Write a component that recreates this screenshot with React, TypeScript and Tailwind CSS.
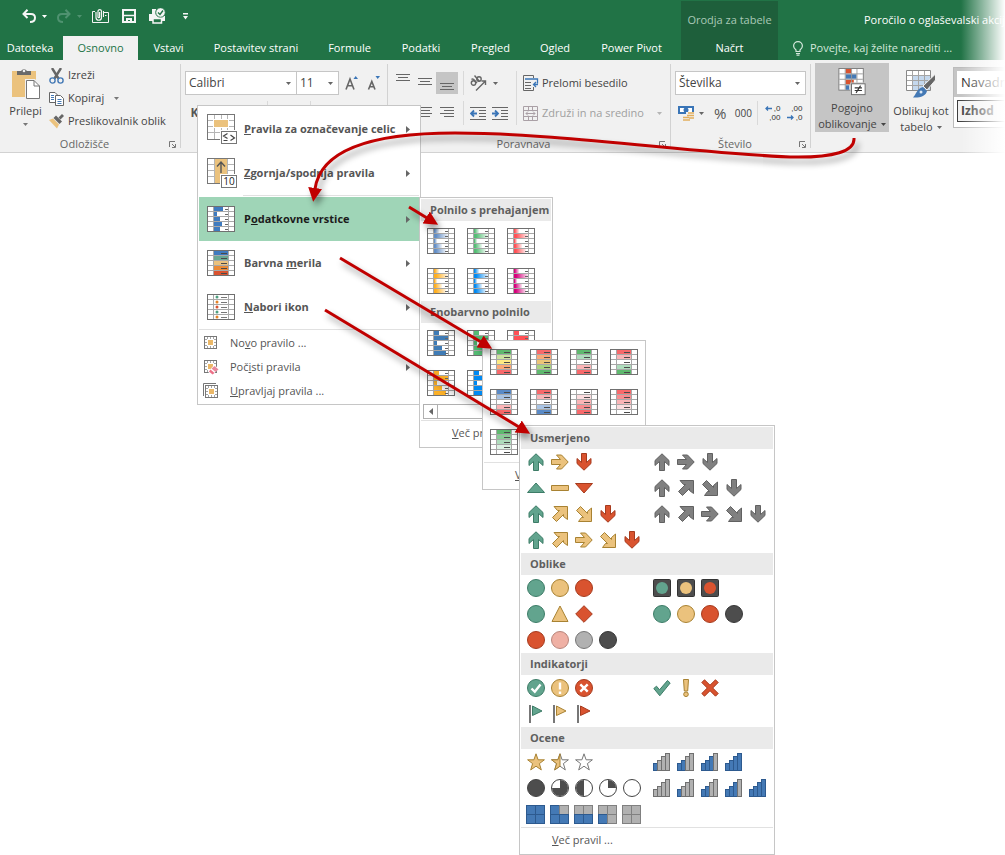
import React from 'react';

type Tone = 'green' | 'yellow' | 'red' | 'gray' | 'pink' | 'silver' | 'dark';

interface RibbonTab {
  label: string;
  width: string;
}

interface GalleryRow {
  label: string;
  left: React.ReactNode[];
  right?: React.ReactNode[];
}

interface GallerySection {
  title: string;
  rows: GalleryRow[];
}

const FILL: Record<Tone, string> = {
  green: '#62a48e',
  yellow: '#ebc27d',
  red: '#d9532f',
  gray: '#808080',
  pink: '#efb0a4',
  silver: '#b1b1b1',
  dark: '#4d4d4d',
};

const EDGE: Record<Tone, string> = {
  green: '#3d7c67',
  yellow: '#a88232',
  red: '#a63b1e',
  gray: '#616161',
  pink: '#b8857b',
  silver: '#767676',
  dark: '#383838',
};

const tabs: RibbonTab[] = [
  { label: 'Datoteka', width: 'w-[60px] mr-[3px]' },
  { label: 'Osnovno', width: 'w-[75px]' },
  { label: 'Vstavi', width: 'w-[61px]' },
  { label: 'Postavitev strani', width: 'w-[114px]' },
  { label: 'Formule', width: 'w-[73px]' },
  { label: 'Podatki', width: 'w-[70px]' },
  { label: 'Pregled', width: 'w-[69px]' },
  { label: 'Ogled', width: 'w-[60px]' },
  { label: 'Power Pivot', width: 'w-[93px]' },
];

/* ---------- small drawing helpers ---------- */

const Caret: React.FC<{ className?: string }> = ({ className = 'text-[#666]' }) => (
  <svg width="5" height="3" viewBox="0 0 5 3" className={`shrink-0 ${className}`}>
    <path d="M0 0H5L2.5 3Z" fill="currentColor" />
  </svg>
);

const Launcher: React.FC = () => (
  <svg width="7" height="7" viewBox="0 0 7 7" fill="none" stroke="#777">
    <path d="M.5 6V.5H6M3 3L6 6M6.5 3V6.5H3" />
  </svg>
);

const Lines: React.FC<{ rows: [number, number, number][] }> = ({ rows }) => (
  <svg width="22" height="22" viewBox="0 0 22 22" stroke="#666">
    {rows.map(([x1, x2, y]) => (
      <path key={y} d={`M${x1} ${y + 0.5}H${x2}`} />
    ))}
  </svg>
);

/* ---------- conditional formatting table thumbnails ---------- */

interface TableIconProps {
  fills: string[];
  widths?: number[];
  gradient?: boolean;
  dash?: 'short' | 'long';
}

const TableIcon: React.FC<TableIconProps> = ({ fills, widths, gradient = false, dash = 'short' }) => {
  const id = React.useId();
  return (
    <svg width="28" height="26" viewBox="0 0 28 26" className="shrink-0">
      {gradient && (
        <linearGradient id={id}>
          <stop offset="0.15" stopColor={fills[0]} />
          <stop offset="1" stopColor={fills[0]} stopOpacity="0.1" />
        </linearGradient>
      )}
      <rect width="28" height="26" fill="#fff" />
      <path d="M1 5.5H27M1 10.5H27M1 15.5H27M1 20.5H27M6.5 1V25M21.5 1V25" stroke="#a8a8a8" />
      {[0, 1, 2, 3, 4].map(i => (
        <g key={i}>
          <rect
            x="7"
            y={i * 5 + 1}
            width={widths ? widths[i] : 14}
            height="4"
            fill={gradient ? `url(#${id})` : fills[i % fills.length]}
          />
          <path
            d={dash === 'short' ? `M18 ${i * 5 + 3.5}H21` : `M14 ${i * 5 + 3.5}H20`}
            stroke={dash === 'short' ? '#666' : '#4a4a4a'}
          />
        </g>
      ))}
      <rect x="0.5" y="0.5" width="27" height="25" fill="none" stroke="#707070" />
    </svg>
  );
};

const BAR_WIDTHS = [5, 14, 3, 8, 12];

const HighlightRulesIcon = () => (
  <svg width="30" height="31" viewBox="0 0 30 31" className="shrink-0">
    <rect x="0.5" y="0.5" width="27" height="25" fill="#fff" stroke="#777" />
    <path d="M1 6.5H27M1 12.5H27M1 18.5H27M7.5 1V25M14.5 12V25M20.5 1V25M14.5 1V6" stroke="#b5b5b5" />
    <rect x="6" y="5" width="16" height="9" fill="#fff" />
    <rect x="7" y="6" width="14" height="7" fill="#ebc27d" />
    <rect x="13" y="16" width="17" height="15" fill="#fff" />
    <rect x="14.5" y="17.5" width="15" height="12" fill="#fff" stroke="#777" />
    <path d="M20.5 19.5L16.5 22L20.5 24.5M16.5 26.5H20.5M23.5 21L27.5 24L23.5 26.5" fill="none" stroke="#444" strokeWidth="1.2" />
  </svg>
);

const TopBottomIcon = () => (
  <svg width="30" height="31" viewBox="0 0 30 31" className="shrink-0">
    <rect x="0.5" y="0.5" width="27" height="25" fill="#fff" stroke="#777" />
    <path d="M1 6.5H27M1 12.5H27M1 18.5H27M7.5 1V25M20.5 1V25" stroke="#b5b5b5" />
    <rect x="8" y="1" width="12" height="24" fill="#ebc27d" />
    <path d="M14 15V4M10 8.5L14 4L18 8.5" fill="none" stroke="#555" strokeWidth="1.4" />
    <rect x="13" y="16" width="17" height="15" fill="#fff" />
    <rect x="14.5" y="17.5" width="15" height="12" fill="#fff" stroke="#777" />
    <text x="22" y="27" textAnchor="middle" fontSize="10" fontWeight="400" fill="#222">10</text>
  </svg>
);

const IconSetsIcon = () => (
  <svg width="28" height="26" viewBox="0 0 28 26" className="shrink-0">
    <rect x="0.5" y="0.5" width="27" height="25" fill="#fff" stroke="#707070" />
    <path d="M1 5.5H27M1 10.5H27M1 15.5H27M1 20.5H27M6.5 1V25M21.5 1V25" stroke="#a8a8a8" />
    {['#4fa080', '#e58326', '#d9532f', '#4fa080', '#e58326'].map((color, i) => (
      <g key={i}>
        <circle cx="10" cy={i * 5 + 3} r="1.5" fill={color} />
        <path d={`M14 ${i * 5 + 3.5}H20`} stroke="#777" />
      </g>
    ))}
  </svg>
);

const RuleIcon: React.FC<{ variant: 'new' | 'clear' | 'manage' }> = ({ variant }) => (
  <svg width="16" height="16" viewBox="0 0 16 16" className="shrink-0">
    {variant === 'manage' && <path d="M.5 13V.5H13" fill="none" stroke="#777" />}
    <g transform={variant === 'manage' ? 'translate(2 2)' : 'translate(1 1)'}>
      <rect x="0.5" y="0.5" width="12" height="12" fill="#fff" stroke="#777" />
      <path d="M1 3.5H12M1 9.5H12M3.5 1V12M9.5 1V12M6.5 1V12M1 6.5H12" stroke="#a5a5a5" />
      <rect x="3" y="3" width="7" height="7" fill="#fff" />
      <rect x="4" y="4" width="5" height="5" fill="#ebb868" />
    </g>
    {variant === 'clear' && (
      <>
        <path d="M11 6L16 9.5L9.5 16L5 13Z" fill="#fff" />
        <path d="M11.5 7L15.5 10.5L12.5 13L8.5 9.5Z" fill="#e88a9c" />
        <path d="M7.5 10.5L11.5 14L9.5 15.5L6 12.5Z" fill="#ed6f86" />
      </>
    )}
  </svg>
);

/* ---------- icon set symbols ---------- */

const Glyph: React.FC<{ children: React.ReactNode }> = ({ children }) => (
  <svg width="18" height="18" viewBox="0 0 18 18" className="shrink-0">{children}</svg>
);

const STRAIGHT_ARROW = 'M9 .8L16 7.5V12.5L11.5 8.5V17.5H6.5V8.5L2 12.5V7.5Z';
const DIAGONAL_ARROW = 'M3 1.5H16.5V14.5L12.5 11.5V9.5L5.5 16.5L1.5 12.5L8.5 5.5H6.5Z';

// angles are clockwise from "up"; odd multiples of 45 use the diagonal outline
const Arrow: React.FC<{ tone: Tone; angle: number }> = ({ tone, angle }) => {
  const diagonal = angle % 90 !== 0;
  return (
    <Glyph>
      <path
        d={diagonal ? DIAGONAL_ARROW : STRAIGHT_ARROW}
        transform={`rotate(${diagonal ? angle - 45 : angle} 9 9)`}
        fill={FILL[tone]}
        stroke={EDGE[tone]}
      />
    </Glyph>
  );
};

const Circle: React.FC<{ tone: Tone }> = ({ tone }) => (
  <Glyph>
    <circle cx="9" cy="9" r="8.5" fill={FILL[tone]} stroke={EDGE[tone]} />
  </Glyph>
);

const Poly: React.FC<{ tone: Tone; d: string }> = ({ tone, d }) => (
  <Glyph>
    <path d={d} fill={FILL[tone]} stroke={EDGE[tone]} strokeLinejoin="round" />
  </Glyph>
);

const Light: React.FC<{ tone: Tone }> = ({ tone }) => (
  <Glyph>
    <rect x="0.5" y="0.5" width="17" height="17" rx="1" fill="#4d4d4d" stroke="#333" />
    <circle cx="9" cy="9" r="6" fill={FILL[tone]} />
  </Glyph>
);

const Badge: React.FC<{ tone: Tone; d: string }> = ({ tone, d }) => (
  <Glyph>
    <circle cx="9" cy="9" r="8.5" fill={FILL[tone]} stroke={EDGE[tone]} />
    <path d={d} fill="none" stroke="#fff" strokeWidth="2.4" />
  </Glyph>
);

const Flag: React.FC<{ tone: Tone }> = ({ tone }) => (
  <Glyph>
    <path d="M3 0V18" stroke="#777" strokeWidth="2" />
    <path d="M5.5 1L15 6L5.5 10.5Z" fill={FILL[tone]} stroke={EDGE[tone]} />
  </Glyph>
);

const STAR = 'M9 .8L11.1 6.8H17.4L12.4 10.6L14.3 16.9L9 13.2L3.7 16.9L5.6 10.6L.6 6.8H6.9Z';

const Star: React.FC<{ fill: 'full' | 'half' | 'none' }> = ({ fill }) => (
  <Glyph>
    <path d={STAR} fill={fill === 'full' ? '#ebc27d' : '#fff'} stroke={fill === 'full' ? '#a88232' : '#777'} />
    {fill === 'half' && (
      <path d="M9 .8V13.2L3.7 16.9L5.6 10.6L.6 6.8H6.9Z" fill="#ebc27d" stroke="#a88232" />
    )}
  </Glyph>
);

const Bars: React.FC<{ on: number }> = ({ on }) => (
  <Glyph>
    {[0, 1, 2, 3].map(i => (
      <rect
        key={i}
        x={i * 4 + 0.5}
        y={10.5 - Math.round(i * 3.3)}
        width="4"
        height={7 + Math.round(i * 3.3)}
        fill={i < on ? '#4479b5' : '#b1b1b1'}
        stroke={i < on ? '#2d5a8f' : '#707070'}
      />
    ))}
  </Glyph>
);

const PIES = ['', 'M9 9V1A8 8 0 0 1 17 9Z', 'M9 1A8 8 0 0 0 9 17Z', 'M9 9V1A8 8 0 1 1 1 9Z'];

const Pie: React.FC<{ quarters: number }> = ({ quarters }) => (
  <Glyph>
    <circle cx="9" cy="9" r="8.5" fill={quarters === 4 ? '#4d4d4d' : '#fff'} stroke="#444" />
    {quarters < 4 && <path d={PIES[quarters]} fill="#4d4d4d" />}
  </Glyph>
);

const Boxes: React.FC<{ on: boolean[] }> = ({ on }) => (
  <svg width="19" height="19" viewBox="0 0 19 19" className="-ml-px shrink-0">
    {on.map((active, i) => (
      <rect
        key={i}
        x={(i % 2) * 9 + 0.5}
        y={Math.floor(i / 2) * 9 + 0.5}
        width="9"
        height="9"
        fill={active ? '#4479b5' : '#b1b1b1'}
        stroke={active ? '#2d5a8f' : '#808080'}
      />
    ))}
  </svg>
);

const UP = 0;
const UP_RIGHT = 45;
const RIGHT = 90;
const DOWN_RIGHT = 135;
const DOWN = 180;

const arrows = (items: [Tone, number][]) =>
  items.map(([tone, angle], i) => <Arrow key={i} tone={tone} angle={angle} />);

const sections: GallerySection[] = [
  {
    title: 'Usmerjeno',
    rows: [
      {
        label: '3 puščice',
        left: arrows([['green', UP], ['yellow', RIGHT], ['red', DOWN]]),
        right: arrows([['gray', UP], ['gray', RIGHT], ['gray', DOWN]]),
      },
      {
        label: '3 trikotniki',
        left: [
          <Poly tone="green" d="M9 4L17.5 13.5H.5Z" />,
          <Poly tone="yellow" d="M.5 6.5H17.5V11.5H.5Z" />,
          <Poly tone="red" d="M.5 4.5H17.5L9 14Z" />,
        ],
        right: arrows([['gray', UP], ['gray', UP_RIGHT], ['gray', DOWN_RIGHT], ['gray', DOWN]]),
      },
      {
        label: '4 puščice',
        left: arrows([['green', UP], ['yellow', UP_RIGHT], ['yellow', DOWN_RIGHT], ['red', DOWN]]),
        right: arrows([['gray', UP], ['gray', UP_RIGHT], ['gray', RIGHT], ['gray', DOWN_RIGHT], ['gray', DOWN]]),
      },
      {
        label: '5 puščic',
        left: arrows([['green', UP], ['yellow', UP_RIGHT], ['yellow', RIGHT], ['yellow', DOWN_RIGHT], ['red', DOWN]]),
      },
    ],
  },
  {
    title: 'Oblike',
    rows: [
      {
        label: '3 semaforji',
        left: [<Circle tone="green" />, <Circle tone="yellow" />, <Circle tone="red" />],
        right: [<Light tone="green" />, <Light tone="yellow" />, <Light tone="red" />],
      },
      {
        label: '3 znaki',
        left: [
          <Circle tone="green" />,
          <Poly tone="yellow" d="M9 1L17 16.5H1Z" />,
          <Poly tone="red" d="M9 .7L17.3 9L9 17.3L.7 9Z" />,
        ],
        right: [<Circle tone="green" />, <Circle tone="yellow" />, <Circle tone="red" />, <Circle tone="dark" />],
      },
      {
        label: 'Rdeče do črno',
        left: [<Circle tone="red" />, <Circle tone="pink" />, <Circle tone="silver" />, <Circle tone="dark" />],
      },
    ],
  },
  {
    title: 'Indikatorji',
    rows: [
      {
        label: '3 simboli',
        left: [
          <Badge tone="green" d="M4.5 9.5L7.8 12.8L13.5 5.5" />,
          <Badge tone="yellow" d="M9 3.5V10.5M9 12.5V15" />,
          <Badge tone="red" d="M5.3 5.3L12.7 12.7M12.7 5.3L5.3 12.7" />,
        ],
        right: [
          <Poly tone="green" d="M.8 9.5L3.5 7.2L6.5 10.8L14.5 1.5L17.2 4L6.8 16.8Z" />,
          <Glyph>
            <path d="M6.5 .5H11.5L10.7 12H7.3Z" fill="#ebc27d" stroke="#a88232" />
            <circle cx="9" cy="15.3" r="2.3" fill="#ebc27d" stroke="#a88232" />
          </Glyph>,
          <Poly tone="red" d="M3.5 .8L9 6.2L14.5 .8L17.2 3.5L11.7 9L17.2 14.5L14.5 17.2L9 11.7L3.5 17.2L.8 14.5L6.3 9L.8 3.5Z" />,
        ],
      },
      {
        label: '3 zastavice',
        left: [<Flag tone="green" />, <Flag tone="yellow" />, <Flag tone="red" />],
      },
    ],
  },
  {
    title: 'Ocene',
    rows: [
      {
        label: '3 zvezdice',
        left: [<Star fill="full" />, <Star fill="half" />, <Star fill="none" />],
        right: [1, 2, 3, 4].map(n => <Bars key={n} on={n} />),
      },
      {
        label: '5 četrtin',
        left: [4, 3, 2, 1, 0].map(n => <Pie key={n} quarters={n} />),
        right: [0, 1, 2, 3, 4].map(n => <Bars key={n} on={n} />),
      },
      {
        label: '5 polj',
        left: [
          <Boxes on={[true, true, true, true]} />,
          <Boxes on={[true, false, true, true]} />,
          <Boxes on={[false, false, true, true]} />,
          <Boxes on={[false, false, true, false]} />,
          <Boxes on={[false, false, false, false]} />,
        ],
      },
    ],
  },
];

/* ---------- title bar and tabs ---------- */

const QuickAccess = () => (
  <div className="mb-1 flex h-8 items-center pl-[22px] text-[#f5f5f5] [&_button]:shrink-0">
    <button aria-label="Razveljavi" className="flex items-center gap-1.5">
      <svg width="14" height="14" viewBox="0 0 14 14" fill="none" stroke="currentColor" strokeWidth="2">
        <path d="M5.5 .8L1.5 5L5.5 9M2 5H9C12 5 13 7 13 8.7C13 11.5 11 13 8 13" />
      </svg>
      <Caret className="text-white" />
    </button>
    <button aria-label="Uveljavi" className="ml-2.5 flex items-center gap-1.5 text-[#4f9270]">
      <svg width="14" height="14" viewBox="0 0 14 14" fill="none" stroke="currentColor" strokeWidth="2">
        <path d="M8.5 .8L12.5 5L8.5 9M12 5H5C2 5 1 7 1 8.7C1 11.5 3 13 6 13" />
      </svg>
      <Caret className="text-[#4f9270]" />
    </button>
    <button aria-label="Priloži" className="ml-2.5">
      <svg width="17" height="16" viewBox="0 0 17 16" fill="none" stroke="currentColor">
        <path d="M3 3.5H.5V14.5H16.5V4.5H12M13 7.5H14.5" />
        <path d="M4 4V9.5A2.5 2.5 0 0 0 9.5 9.5V3A1.8 1.8 0 0 0 6 3V9C6 10 7.6 10 7.6 9V4" strokeWidth="1.2" />
        <path d="M11.5 3V9" />
      </svg>
    </button>
    <button aria-label="Shrani" className="ml-3">
      <svg width="16" height="16" viewBox="0 0 16 16" fill="none" stroke="currentColor">
        <path d="M2 2H14V14H2Z" strokeWidth="2" />
        <path d="M3 7.5H13" strokeWidth="1.5" />
        <path d="M5 10H11V14H9V12H7V14H5Z" fill="currentColor" stroke="none" />
      </svg>
    </button>
    <button aria-label="Hitro tiskanje" className="ml-3">
      <svg width="17" height="16" viewBox="0 0 17 16" fill="none" stroke="currentColor">
        <path d="M3 1H7V4H9L12 8H16V13H13V11H4V13H0V6H3Z" fill="currentColor" stroke="none" />
        <circle cx="11.5" cy="4.5" r="4.8" fill="currentColor" stroke="#217346" />
        <path d="M9 4.5L11 6.5L14 2.5" stroke="#217346" strokeWidth="1.4" />
        <path d="M4 10.5H12.5V15H4Z" fill="#217346" strokeWidth="1.5" />
      </svg>
    </button>
    <button aria-label="Prilagodi orodno vrstico" className="ml-[17px]">
      <svg width="5" height="7" viewBox="0 0 5 7" fill="currentColor">
        <path d="M0 0H5V1.5H0ZM0 3H5L2.5 6.5Z" />
      </svg>
    </button>
  </div>
);

const Header = () => (
  <header className="flex h-[60px] bg-[#217346] text-white">
    <div className="shrink-0">
      <QuickAccess />
      <nav className="flex h-6">
        {tabs.map(tab => (
          <button
            key={tab.label}
            className={`${tab.width} shrink-0 whitespace-nowrap ${tab.label === 'Osnovno' ? 'bg-[#f1f1f1] text-[#217346]' : ''}`}
          >
            {tab.label}
          </button>
        ))}
      </nav>
    </div>
    <div className="ml-[3px] mt-px flex w-[97px] shrink-0 flex-col bg-[#1e5f3b] text-center">
      <span className="flex h-[35px] items-center justify-center whitespace-nowrap pt-1 text-[#a9c9b7]">Orodja za tabele</span>
      <button className="h-6">Načrt</button>
    </div>
    <div className="min-w-0 flex-1 overflow-hidden whitespace-nowrap">
      <h1 className="flex h-9 items-center pl-[86px] pt-1">Poročilo o oglaševalski akciji</h1>
      <button className="flex h-6 items-center gap-[7px] pl-[15px] text-[#d5e8dc]">
        <svg width="10" height="15" viewBox="0 0 10 15" fill="none" stroke="currentColor" strokeWidth="1.2">
          <path d="M3 10.5V9C1 7.5 .6 6.5 .6 5A4.4 4.4 0 0 1 9.4 5C9.4 6.5 9 7.5 7 9V10.5ZM3 12.5H7M3.5 14.2H6.5" />
        </svg>
        Povejte, kaj želite narediti ...
      </button>
    </div>
  </header>
);

/* ---------- ribbon ---------- */

interface GroupProps {
  label: string;
  width: string;
  children: React.ReactNode;
}

const Group: React.FC<GroupProps> = ({ label, width, children }) => (
  <section className={`${width} flex shrink-0 flex-col py-1`}>
    <div className="flex flex-1 flex-col border-r border-[#d2d2d2]">
      <div className="min-h-0 flex-1">{children}</div>
      <div className="flex h-2 shrink-0 items-center pr-1">
        <h2 className="flex-1 text-center leading-4 text-[#666]">{label}</h2>
        <button aria-label={`${label} – več možnosti`}><Launcher /></button>
      </div>
    </div>
  </section>
);

const Picker: React.FC<{ label: string; value: string; width: string }> = ({ label, value, width }) => (
  <div className={`relative ${width}`}>
    <select
      aria-label={label}
      defaultValue={value}
      className="h-6 w-full appearance-none border border-[#c6c6c6] bg-white pl-[3px] text-xs text-[#444] outline-none"
    >
      <option>{value}</option>
    </select>
    <Caret className="pointer-events-none absolute right-1.5 top-[11px] text-[#666]" />
  </div>
);

const Divider: React.FC = () => <span className="h-6 w-px shrink-0 bg-[#d9d9d9]" />;

const Clipboard = () => (
  <div className="flex">
    <button className="flex w-[49px] flex-col items-center pl-0.5 pt-1">
      <svg width="28" height="31" viewBox="0 0 28 31">
        <path d="M0 3H24V29H0Z" fill="#ebc27d" />
        <path d="M5 7V3H9A3.5 3.5 0 0 1 15 3H19V7Z" fill="#6a6a6a" />
        <circle cx="12" cy="3" r="1.3" fill="#f1f1f1" />
        <path d="M13 11H23L28 16V31H13Z" fill="#f1f1f1" />
        <path d="M14.5 12.5H22L27.5 18V30.5H14.5Z" fill="#fff" stroke="#777" />
        <path d="M22 12.5V18H27.5" fill="none" stroke="#777" />
      </svg>
      <span className="mt-1 leading-4">Prilepi</span>
      <Caret className="mt-1 text-[#777]" />
    </button>
    <div className="flex flex-col">
      <button className="flex h-[23px] items-center gap-1">
        <svg width="15" height="16" viewBox="0 0 15 16" fill="none">
          <path d="M3 0L9.5 10.5M12 0L5.5 10.5" stroke="#666" strokeWidth="2.4" />
          <circle cx="3.5" cy="12.5" r="2.6" stroke="#4479b5" strokeWidth="1.4" />
          <circle cx="11.5" cy="12.5" r="2.6" stroke="#4479b5" strokeWidth="1.4" />
        </svg>
        Izreži
      </button>
      <button className="flex h-[23px] items-center gap-1">
        <svg width="15" height="15" viewBox="0 0 15 15" fill="#fff" stroke="#666">
          <path d="M.5 1.5H6L8.5 4V11.5H.5Z" />
          <path d="M2 4.5H5M2 6.5H5M2 8.5H5" stroke="#4479b5" />
          <path d="M6.5 4.5H11.5L14.5 7.5V14.5H6.5Z" />
          <path d="M8.5 8.5H12.5M8.5 10.5H12.5M8.5 12.5H12.5" stroke="#4479b5" />
        </svg>
        Kopiraj
        <Caret className="ml-1.5 text-[#777]" />
      </button>
      <button className="flex h-[23px] items-center gap-1 whitespace-nowrap">
        <svg width="15" height="15" viewBox="0 0 15 15">
          <path d="M0 6L4 4.5L10 10.5L8 14.5Z" fill="#ebc27d" />
          <path d="M4.5 4L7 1.5L13 7.5L10.5 10Z" fill="#666" />
          <path d="M9.5 3.5L13 0L15 2L11.5 5.5Z" fill="#666" />
        </svg>
        Preslikovalnik oblik
      </button>
    </div>
  </div>
);

const FontGroup = () => (
  <div className="flex flex-col gap-1.5 pl-1 pt-[7px]">
    <div className="flex items-center">
      <Picker label="Pisava" value="Calibri" width="w-28" />
      <Picker label="Velikost pisave" value="11" width="w-[43px] -ml-px" />
      <button aria-label="Povečaj pisavo" className="ml-1.5">
        <svg width="14" height="16" viewBox="0 0 14 16" fill="none" stroke="#666" strokeWidth="1.6">
          <path d="M1 14.5L5 4L9 14.5M2.5 10.8H7.5" />
          <path d="M8.5 4H13L10.7 1Z" fill="#3a75b7" stroke="none" />
        </svg>
      </button>
      <button aria-label="Pomanjšaj pisavo" className="ml-2">
        <svg width="14" height="16" viewBox="0 0 14 16" fill="none" stroke="#666" strokeWidth="1.6">
          <path d="M1.5 14.5L4.8 6.5L8 14.5M2.5 11.8H7" />
          <path d="M8.5 1H13L10.7 4Z" fill="#3a75b7" stroke="none" />
        </svg>
      </button>
    </div>
    <div className="flex h-6 items-center">
      <button className="w-4 pl-[3px] text-xs font-bold text-[#555]">K</button>
      <button className="w-6 italic">L</button>
      <button className="w-[42px] underline">P</button>
      <Divider />
      <span className="w-[42px]" />
      <Divider />
    </div>
  </div>
);

const AlignGroup = () => (
  <div className="flex pt-[7px]">
    <div className="flex flex-col gap-1.5 pl-1">
      <div className="flex h-6 items-center">
        <button aria-label="Poravnaj na vrh"><Lines rows={[[4, 18, 2], [6, 16, 5], [4, 18, 8]]} /></button>
        <button aria-label="Poravnaj na sredino"><Lines rows={[[4, 18, 6], [6, 16, 9], [4, 18, 12]]} /></button>
        <button aria-label="Poravnaj na dno" className="bg-[#c5c5c5]"><Lines rows={[[4, 18, 11], [6, 16, 14], [4, 18, 17]]} /></button>
        <span className="w-[5px]" />
        <Divider />
        <button aria-label="Usmerjenost" className="ml-1.5 flex items-center gap-1.5">
          <svg width="17" height="16" viewBox="0 0 17 16" fill="none" stroke="#666" strokeWidth="1.4">
            <circle cx="3.5" cy="8" r="2.2" />
            <path d="M1.5 4.5C3 3 4 4.5 7 8" />
            <path d="M4.5 .5L9.5 6.5" />
            <circle cx="9" cy="4" r="2.2" />
            <path d="M6 15.5L15 6.5M11.5 6H15.5V10" />
          </svg>
          <Caret />
        </button>
      </div>
      <div className="flex h-6 items-center">
        <button aria-label="Levo"><Lines rows={[[4, 18, 5], [4, 14, 8], [4, 18, 11], [4, 14, 14]]} /></button>
        <button aria-label="Na sredino"><Lines rows={[[4, 18, 5], [6, 16, 8], [4, 18, 11], [6, 16, 14]]} /></button>
        <button aria-label="Desno"><Lines rows={[[4, 18, 5], [8, 18, 8], [4, 18, 11], [8, 18, 14]]} /></button>
        <span className="w-[5px]" />
        <Divider />
        <button aria-label="Zmanjšaj zamik" className="ml-1.5">
          <svg width="16" height="13" viewBox="0 0 16 13" fill="none" stroke="#666">
            <path d="M0 .5H16M9 3.5H16M9 6.5H16M9 9.5H16M0 12.5H16" />
            <path d="M7 6.5H1.5M4 3.5L1 6.5L4 9.5" stroke="#3a75b7" strokeWidth="1.8" />
          </svg>
        </button>
        <button aria-label="Povečaj zamik" className="ml-1.5">
          <svg width="16" height="13" viewBox="0 0 16 13" fill="none" stroke="#666">
            <path d="M0 .5H16M9 3.5H16M9 6.5H16M9 9.5H16M0 12.5H16" />
            <path d="M0 6.5H5.5M3 3.5L6 6.5L3 9.5" stroke="#3a75b7" strokeWidth="1.8" />
          </svg>
        </button>
      </div>
    </div>
    <span className="ml-2 h-[54px] w-px bg-[#d9d9d9]" />
    <div className="ml-1.5 flex flex-1 flex-col gap-1.5 whitespace-nowrap">
      <button className="flex h-6 items-center gap-[3px]">
        <svg width="16" height="16" viewBox="0 0 16 16" fill="none" stroke="#666">
          <path d="M.5 .5H10.5V3M.5 .5V15.5H10.5V12M2 7.5H8M2 10.5H8M2 13.5H8" />
          <path d="M2 4H14.5V8.5M15 9.5H11M13 7L10.5 9.5L13 12" stroke="#3a75b7" strokeWidth="1.3" />
        </svg>
        Prelomi besedilo
      </button>
      <button className="flex h-6 items-center gap-[3px] text-[#a0a0a0]" disabled>
        <svg width="16" height="15" viewBox="0 0 16 15" fill="none" stroke="#aaa0a6">
          <path d="M.5 .5H14.5V14.5H.5ZM.5 4.5H14.5M.5 10.5H14.5M5.5 .5V4.5M9.5 .5V4.5M5.5 10.5V14.5M9.5 10.5V14.5" />
          <path d="M3 7.5H12M5 5.5L3 7.5L5 9.5M10 5.5L12 7.5L10 9.5" />
        </svg>
        Združi in na sredino
        <Caret className="ml-auto mr-2 text-[#b5b5b5]" />
      </button>
    </div>
  </div>
);

const NumberGroup = () => (
  <div className="flex flex-col gap-1.5 pl-1 pt-[7px]">
    <Picker label="Oblika števila" value="Številka" width="w-[131px]" />
    <div className="flex h-6 items-center pl-[3px]">
      <button aria-label="Oblika računovodskih števil" className="flex items-center gap-1">
        <svg width="17" height="16" viewBox="0 0 17 16">
          <path d="M0 1H16V9H0Z" fill="#3a75b7" />
          <path d="M2 3H14V7H2Z" fill="#fff" />
          <circle cx="8" cy="5" r="2.5" fill="#3a75b7" />
          <path d="M8 7H17V16H4V11H8Z" fill="#f1f1f1" />
          <path d="M10 8H16M9 10.5H16M5 12.5H11M5 15H12M11 13H16" stroke="#e2ae5d" strokeWidth="1.5" />
        </svg>
        <Caret />
      </button>
      <button className="ml-2.5 text-[15px] text-[#555]">%</button>
      <button className="ml-2 w-[18px] text-center text-[10px] text-[#444]">000</button>
      <span className="w-[5px]" />
      <Divider />
      <button
        aria-label="Povečaj decimalke"
        className="ml-1 flex w-[18px] flex-col items-end font-['Liberation_Sans',sans-serif] text-[8px] leading-[9px] text-[#333]"
      >
        <span className="flex items-center gap-0.5">
          <svg width="7" height="5" viewBox="0 0 7 5" fill="none" stroke="#3a75b7" strokeWidth="1.3">
            <path d="M7 2.5H1M3 .5L1 2.5L3 4.5" />
          </svg>
          ,0
        </span>
        <span>,00</span>
      </button>
      <button
        aria-label="Zmanjšaj decimalke"
        className="ml-1 flex w-[18px] flex-col items-end font-['Liberation_Sans',sans-serif] text-[8px] leading-[9px] text-[#333]"
      >
        <span>,00</span>
        <span className="flex items-center gap-0.5">
          <svg width="7" height="5" viewBox="0 0 7 5" fill="none" stroke="#3a75b7" strokeWidth="1.3">
            <path d="M0 2.5H6M4 .5L6 2.5L4 4.5" />
          </svg>
          ,0
        </span>
      </button>
    </div>
  </div>
);

const StylesGroup = () => (
  <div className="flex min-w-0 flex-1 overflow-hidden pl-1 pt-[3px]">
    <button className="flex h-[69px] w-[74px] shrink-0 flex-col items-center bg-[#c5c5c5] pt-[5px]">
      <svg width="30" height="31" viewBox="0 0 30 31">
        <rect x="0.5" y="0.5" width="27" height="24" fill="#fff" stroke="#777" />
        <path d="M8 1H14V6H8ZM8 13H17V18H8Z" fill="#d9532f" />
        <path d="M8 7H20V12H8ZM8 19H12V24H8Z" fill="#4479b5" />
        <path d="M1 6.5H27M1 12.5H27M1 18.5H27M7.5 1V24M14.5 1V24M20.5 1V24" stroke="#999" />
        <rect x="13" y="16" width="17" height="15" fill="#c5c5c5" />
        <rect x="14.5" y="17.5" width="15" height="12" fill="#fff" stroke="#666" />
        <path d="M18 22H26M18 25H26M24.5 19.5L19.5 27.5" stroke="#333" strokeWidth="1.2" />
      </svg>
      <span className="mt-1 leading-4">Pogojno</span>
      <span className="flex items-center gap-1 leading-4">oblikovanje <Caret className="text-[#444]" /></span>
    </button>
    <button className="ml-0.5 flex w-[60px] shrink-0 flex-col items-center pt-[5px]">
      <svg width="30" height="31" viewBox="0 0 30 31">
        <path d="M.5 2.5H24.5V22.5H.5Z" fill="#fff" stroke="#888" />
        <path d="M7 8H24V22H7Z" fill="#c4d8ee" />
        <path d="M1 7.5H24M1 12.5H24M1 17.5H24M6.5 3V22M12.5 3V22M18.5 3V22" stroke="#a5a5a5" />
        <path d="M29.5 6V12L21 22L17 18Z" fill="#666" stroke="#f1f1f1" />
        <path d="M17 19L21 23C20 28 14 30 7 29.5C10 27 11 20 17 19Z" fill="#4479b5" />
        <circle cx="15" cy="24" r="1.5" fill="#dce8f5" />
      </svg>
      <span className="mt-1 whitespace-nowrap leading-4">Oblikuj kot</span>
      <span className="flex items-center gap-1 leading-4">tabelo <Caret /></span>
    </button>
    <div className="ml-0.5 mt-1 h-[61px] w-40 shrink-0 border border-[#bbb] bg-white">
      <button className="block h-[29px] w-24 border-[3px] border-[#c5c5c5] bg-white pl-1 text-left text-[13px] text-[#222]">Navadno</button>
      <button className="ml-[3px] mt-[3px] block h-[22px] w-24 border border-[#3f3f3f] bg-[#f2f2f2] pl-[3px] text-left text-xs font-bold text-[#3f3f3f]">Izhod</button>
    </div>
  </div>
);

const Ribbon = () => (
  <div className="flex h-[93px] overflow-hidden border-b border-[#d2d2d2] bg-[#f1f1f1]">
    <Group label="Odložišče" width="w-[181px]"><Clipboard /></Group>
    <Group label="Pisava" width="w-[207px]"><FontGroup /></Group>
    <Group label="Poravnava" width="w-[283px]"><AlignGroup /></Group>
    <Group label="Število" width="w-[140px]"><NumberGroup /></Group>
    <StylesGroup />
  </div>
);

/* ---------- menus ---------- */

const Panel: React.FC<{ className: string; children: React.ReactNode }> = ({ className, children }) => (
  <div role="menu" className={`absolute border border-[#c6c6c6] bg-white p-px ${className}`}>{children}</div>
);

const PanelTitle: React.FC<{ children: React.ReactNode }> = ({ children }) => (
  <h3 className="flex h-[22px] items-center whitespace-nowrap bg-[#eaeaea] pl-[9px] font-bold text-[#5f5f5f]">{children}</h3>
);

const MoreRules: React.FC = () => (
  <button className="flex h-[26px] w-full items-center whitespace-nowrap border-t border-[#e1e1e1] pl-[31px] text-[#555]">
    <span><u>V</u>eč pravil ...</span>
  </button>
);

const MenuItem: React.FC<{
  icon: React.ReactNode;
  children: React.ReactNode;
  large?: boolean;
  active?: boolean;
  submenu?: boolean;
}> = ({ icon, children, large = false, active = false, submenu = false }) => (
  <button
    role="menuitem"
    className={`flex w-full items-center whitespace-nowrap text-left ${large ? 'h-11 pl-2 font-bold' : 'h-6 pl-1'} ${active ? 'bg-[#9fd5b7] text-[#1c1c1c]' : 'text-[#555]'}`}
  >
    <span className={`shrink-0 ${large ? 'w-[37px]' : 'w-[27px]'}`}>{icon}</span>
    <span className="flex-1">{children}</span>
    {submenu && (
      <svg width="4" height="7" viewBox="0 0 4 7" className="mr-[9px] shrink-0">
        <path d="M0 0L4 3.5L0 7Z" fill="#666" />
      </svg>
    )}
  </button>
);

const RulesMenu = () => (
  <Panel className="left-[197px] top-[105px] w-[224px]">
    <MenuItem large submenu icon={<HighlightRulesIcon />}><u>P</u>ravila za označevanje celic</MenuItem>
    <MenuItem large submenu icon={<TopBottomIcon />}><u>Z</u>gornja/spodnja pravila</MenuItem>
    <hr className="ml-11 mb-px border-[#e1e1e1]" />
    <MenuItem large submenu active icon={<TableIcon fills={['#3f7bbf']} widths={[9, 3, 6, 8, 6]} />}>P<u>o</u>datkovne vrstice</MenuItem>
    <MenuItem large submenu icon={<TableIcon fills={['#3f7bbf', '#69a893', '#ebc27d', '#ec8a35', '#d9532f']} dash="long" />}>Barvna <u>m</u>erila</MenuItem>
    <MenuItem large submenu icon={<IconSetsIcon />}><u>N</u>abori ikon</MenuItem>
    <hr className="mb-px border-[#e1e1e1]" />
    <MenuItem icon={<RuleIcon variant="new" />}>No<u>v</u>o pravilo ...</MenuItem>
    <MenuItem submenu icon={<RuleIcon variant="clear" />}>Poč<u>i</u>sti pravila</MenuItem>
    <MenuItem icon={<RuleIcon variant="manage" />}><u>U</u>pravljaj pravila ...</MenuItem>
  </Panel>
);

const BarRow: React.FC<{ colors: string[]; gradient?: boolean }> = ({ colors, gradient }) => (
  <div className="flex h-10 items-center gap-3 pl-1.5">
    {colors.map(color => (
      <button key={color} aria-label={`Podatkovna vrstica ${color}`}>
        <TableIcon fills={[color]} widths={BAR_WIDTHS} gradient={gradient} />
      </button>
    ))}
  </div>
);

const DataBarsMenu = () => (
  <Panel className="left-[419px] top-[197px] w-[134px]">
    <PanelTitle>Polnilo s prehajanjem</PanelTitle>
    <BarRow gradient colors={['#638ec6', '#54bd74', '#ff5055']} />
    <BarRow gradient colors={['#ffae1e', '#0089f2', '#d6007b']} />
    <PanelTitle>Enobarvno polnilo</PanelTitle>
    <BarRow colors={['#3f7bb5', '#54bd74', '#ff5055']} />
    <BarRow colors={['#fbb028', '#0089f2', '#d6007b']} />
    <div className="mx-0.5 my-px flex h-[15px] border border-[#b0b0b0]">
      <button aria-label="Pomakni levo" className="flex w-3.5 items-center justify-center border-r border-[#b0b0b0]">
        <svg width="4" height="7" viewBox="0 0 4 7"><path d="M4 0L0 3.5L4 7Z" fill="#666" /></svg>
      </button>
    </div>
    <MoreRules />
  </Panel>
);

const scales: string[][] = [
  ['#5fb96f', '#cbe3a0', '#fdea83', '#fba877', '#f8696b'],
  ['#f8696b', '#fba877', '#ecc477', '#a8d27f', '#5fb96f'],
  ['#5fb96f', '#aedcbc', '#ffffff', '#fbb4b6', '#f8696b'],
  ['#f8696b', '#fbb4b6', '#ffffff', '#aedcbc', '#5fb96f'],
  ['#5a8ac6', '#a9c3e3', '#ffffff', '#fbb4b6', '#f8696b'],
  ['#f8696b', '#fbb4b6', '#ffffff', '#a9c3e3', '#5a8ac6'],
  ['#ffffff', '#fcdcde', '#fbb4b6', '#f98d90', '#f8696b'],
  ['#f8696b', '#f98d90', '#fbb4b6', '#fcdcde', '#ffffff'],
  ['#5fb96f', '#8acb96', '#aedcbc', '#dcf1e3', '#ffffff'],
  ['#ffffff', '#dcf1e3', '#aedcbc', '#8acb96', '#5fb96f'],
  ['#5fb96f', '#a5cf78', '#cfdc7a', '#e8e37f', '#fdea83'],
  ['#fdea83', '#e8e37f', '#cfdc7a', '#a5cf78', '#5fb96f'],
];

const ColorScalesMenu = () => (
  <Panel className="left-[482px] top-[340px] w-[164px]">
    <div className="grid grid-cols-[repeat(4,40px)] pl-1.5">
      {scales.map((fills, i) => (
        <button key={i} aria-label={`Barvna lestvica ${i + 1}`} className="flex h-10 items-center">
          <TableIcon fills={fills} dash="long" />
        </button>
      ))}
    </div>
    <MoreRules />
  </Panel>
);

const IconSetsMenu = () => (
  <Panel className="left-[519px] top-[425px] w-[256px]">
    {sections.map(section => (
      <section key={section.title}>
        <PanelTitle>{section.title}</PanelTitle>
        {section.rows.map(row => (
          <div key={row.label} className="flex h-[26px] items-center pl-1.5">
            <button aria-label={row.label} className="flex w-[126px] shrink-0 gap-1.5">
              {row.left.map((icon, i) => <React.Fragment key={i}>{icon}</React.Fragment>)}
            </button>
            {row.right && (
              <button aria-label={`${row.label}, druga različica`} className="flex gap-1.5">
                {row.right.map((icon, i) => <React.Fragment key={i}>{icon}</React.Fragment>)}
              </button>
            )}
          </div>
        ))}
      </section>
    ))}
    <MoreRules />
  </Panel>
);

/* Red arrows that lead from the ribbon button to each submenu */
const Callouts = () => (
  <svg
    width="1005"
    height="855"
    viewBox="0 0 1005 855"
    className="pointer-events-none absolute left-0 top-0 drop-shadow-[3px_5px_3px_rgba(0,0,0,0.4)]"
  >
    <defs>
      <marker id="head" viewBox="0 0 14 14" refX="1" refY="7" markerWidth="14" markerHeight="14" markerUnits="userSpaceOnUse" orient="auto">
        <path d="M0 0L14 7L0 14Z" fill="#c00000" />
      </marker>
    </defs>
    <g fill="none" stroke="#c00000" strokeWidth="3">
      <path d="M854 138C855 151 835 158 790 157C700 154 560 133 455 133C400 133 322 140 315 189" markerEnd="url(#head)" />
      <path d="M409 207L427 218" markerEnd="url(#head)" />
      <path d="M340 258L481 342" markerEnd="url(#head)" />
      <path d="M325 310L519 427" markerEnd="url(#head)" />
    </g>
  </svg>
);

const App: React.FC = () => {
  return (
    <div className="relative min-h-screen overflow-hidden bg-white font-['Open_Sans','Noto_Sans',sans-serif] text-[11px] text-[#444]">
      <Header />
      <Ribbon />
      <div className="pointer-events-none absolute right-0 top-0 h-[153px] w-11 bg-gradient-to-r from-white/0 to-white" />
      <RulesMenu />
      <DataBarsMenu />
      <ColorScalesMenu />
      <IconSetsMenu />
      <Callouts />
    </div>
  );
};

export default App;
